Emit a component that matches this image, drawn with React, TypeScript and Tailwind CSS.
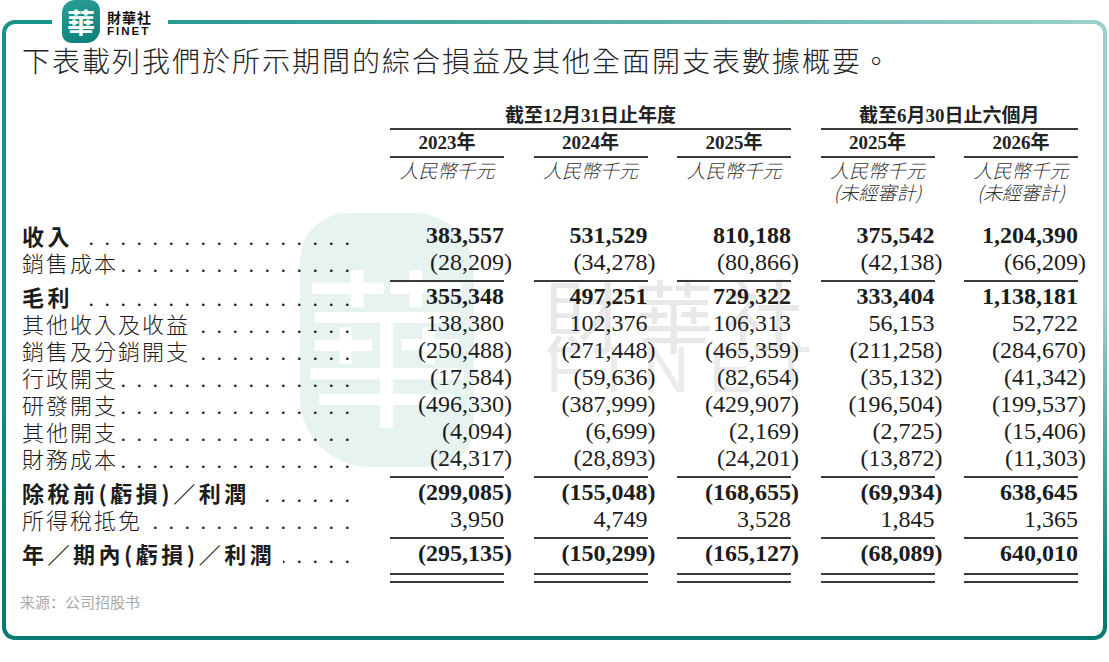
const rows = [
    { label: "收入", bold: true, vals: ["383,557", "531,529", "810,188", "375,542", "1,204,390"] },
    { label: "銷售成本", vals: ["(28,209)", "(34,278)", "(80,866)", "(42,138)", "(66,209)"], line: true },
    { label: "毛利", bold: true, vals: ["355,348", "497,251", "729,322", "333,404", "1,138,181"] },
    { label: "其他收入及收益", vals: ["138,380", "102,376", "106,313", "56,153", "52,722"] },
    { label: "銷售及分銷開支", vals: ["(250,488)", "(271,448)", "(465,359)", "(211,258)", "(284,670)"] },
    { label: "行政開支", vals: ["(17,584)", "(59,636)", "(82,654)", "(35,132)", "(41,342)"] },
    { label: "研發開支", vals: ["(496,330)", "(387,999)", "(429,907)", "(196,504)", "(199,537)"] },
    { label: "其他開支", vals: ["(4,094)", "(6,699)", "(2,169)", "(2,725)", "(15,406)"] },
    { label: "財務成本", vals: ["(24,317)", "(28,893)", "(24,201)", "(13,872)", "(11,303)"], line: true },
    { label: "除稅前(虧損)／利潤", bold: true, vals: ["(299,085)", "(155,048)", "(168,655)", "(69,934)", "638,645"] },
    { label: "所得稅抵免", vals: ["3,950", "4,749", "3,528", "1,845", "1,365"], line: true },
    { label: "年／期內(虧損)／利潤", bold: true, vals: ["(295,135)", "(150,299)", "(165,127)", "(68,089)", "640,010"], double: true },
]

const years = ["2023年", "2024年", "2025年", "2025年", "2026年"]
const grid = "grid grid-cols-[338.5px_114px_114px_114px_114px_114px] gap-x-[29.5px]"
const dots = ".".repeat(40)

function Num({ v, bold }: { v: string; bold?: boolean }) {
    const neg = v.startsWith("(")
    return (
        <div className={`-mr-[8px] text-right text-[24px] leading-[27px] font-['Liberation_Serif',serif] text-[#1c1c1c] ${bold ? "font-bold" : ""}`}>
            {neg ? v : <>{v}<span className="invisible">)</span></>}
        </div>
    )
}

function Rule() {
    return (
        <>
            <div />
            {years.map((_, i) => (
                <div key={i} className="h-[7px]">
                    <div className="mt-[4px] h-[2px] bg-[#3a3a3a]"></div>
                </div>
            ))}
        </>
    )
}

export default function App() {
    return (
        <div className="relative w-[1109px] h-[662px] bg-white overflow-hidden">
            {/* frame */}
            <div className="ml-[2px] mt-[20px] w-[1105px] h-[620px] rounded-[13px] p-[4px] bg-[linear-gradient(to_bottom,rgba(8,122,115,0)_45%,#077a73_92%),linear-gradient(to_right,#15928b,#5fb1ab_60%,#9bd1cc)]">
                <div className="relative w-full h-full rounded-[9px] bg-white pl-[16px] pt-[18px]">
                    {/* watermark */}
                    <div className="absolute left-[294px] top-[189px] w-[174px] h-[254px] rounded-[48px_60px_40px_70px] bg-[#e7f3f1] flex items-center justify-center overflow-hidden">
                        <span className="text-white text-[170px] leading-none font-['Noto_Sans_CJK_TC',sans-serif]">華</span>
                    </div>
                    <div className="absolute left-[538px] top-[248px] text-[80px] leading-none tracking-[10px] text-[#e8e8e8] font-['Noto_Sans_CJK_TC',sans-serif]">財華社</div>
                    <div className="absolute left-[540px] top-[314px] text-[64px] leading-none tracking-[20px] text-[#ebebeb] font-['Liberation_Sans',sans-serif]">FINET</div>

                    <div className="relative">
                        <h1 className="text-[28px] leading-[36px] tracking-[2px] font-light text-[#222] font-['Noto_Sans_CJK_TC',sans-serif]">
                            下表載列我們於所示期間的綜合損益及其他全面開支表數據概要。
                        </h1>

                        {/* column headers */}
                        <div className={`${grid} mt-[26px] text-[#222] font-['Liberation_Serif','Noto_Sans_CJK_TC',serif]`}>
                            <div />
                            <div className="col-span-3 h-[26px] flex items-center justify-center border-b-2 border-[#3a3a3a] text-[19px] font-bold">截至12月31日止年度</div>
                            <div className="col-span-2 h-[26px] flex items-center justify-center border-b-2 border-[#3a3a3a] text-[19px] font-bold">截至6月30日止六個月</div>
                            <div />
                            {years.map((y, i) => (
                                <div key={i} className="h-[28px] flex items-center justify-center border-b-2 border-[#3a3a3a] text-[19px] font-bold">{y}</div>
                            ))}
                            <div />
                            {years.map((_, i) => (
                                <div key={i} className="text-center text-[19px] leading-[22px] italic font-light text-[#333] font-['Noto_Sans_CJK_TC',sans-serif] pt-[1px]">
                                    <div>人民幣千元</div>
                                    {i > 2 && <div>(未經審計)</div>}
                                </div>
                            ))}
                        </div>

                        {/* body */}
                        <div className={`${grid} mt-[19px]`}>
                            {rows.map((r, i) => (
                                <div key={i} className="contents">
                                    <div className="flex items-baseline h-[27px] leading-[27px] text-[#1c1c1c] font-['Noto_Sans_CJK_TC',sans-serif]">
                                        <span className={`text-[22px] whitespace-nowrap ${r.bold ? "font-bold tracking-[3.5px]" : "font-light tracking-[2px]"}`}>{r.label}</span>
                                        <span className={`flex-1 flex justify-end overflow-hidden whitespace-nowrap text-[22px] tracking-[10.5px] font-['Liberation_Serif',serif] ${r.bold ? "ml-[8px]" : ""}`}>{dots}</span>
                                    </div>
                                    {r.vals.map((v, j) => (
                                        <Num key={j} v={v} bold={r.bold} />
                                    ))}
                                    {r.line && <Rule />}
                                    {r.double && (
                                        <>
                                            <div />
                                            {years.map((_, k) => (
                                                <div key={k} className="pt-[6px]">
                                                    <div className="h-[2px] bg-[#3a3a3a]"></div>
                                                    <div className="mt-[6px] h-[2px] bg-[#3a3a3a]"></div>
                                                </div>
                                            ))}
                                        </>
                                    )}
                                </div>
                            ))}
                        </div>

                        <div className="mt-[9px] -ml-[2px] text-[15px] leading-[20px] text-[#a9a9a9] font-['Noto_Sans_CJK_SC',sans-serif]">来源：公司招股书</div>
                    </div>
                </div>
            </div>

            {/* logo over the top border */}
            <div className="absolute left-[52px] top-0 w-[116px] h-[44px] bg-white flex items-start pl-[10px] gap-[7px]">
                <div className="w-[38px] h-[43px] rounded-[13px_10px_14px_9px] bg-[linear-gradient(160deg,#2a9e95,#0b7e77)] flex items-center justify-center">
                    <span className="text-white text-[28px] leading-none font-bold font-['Noto_Sans_CJK_TC',serif]">華</span>
                </div>
                <div className="pt-[10px] flex flex-col">
                    <span className="text-[14px] leading-[15px] font-bold text-[#111] tracking-[1px] font-['Noto_Sans_CJK_TC',sans-serif]">財華社</span>
                    <span className="text-[11.5px] leading-[12px] font-bold text-[#111] tracking-[2px] font-['Liberation_Sans',sans-serif]">FINET</span>
                </div>
            </div>
        </div>
    )
}
